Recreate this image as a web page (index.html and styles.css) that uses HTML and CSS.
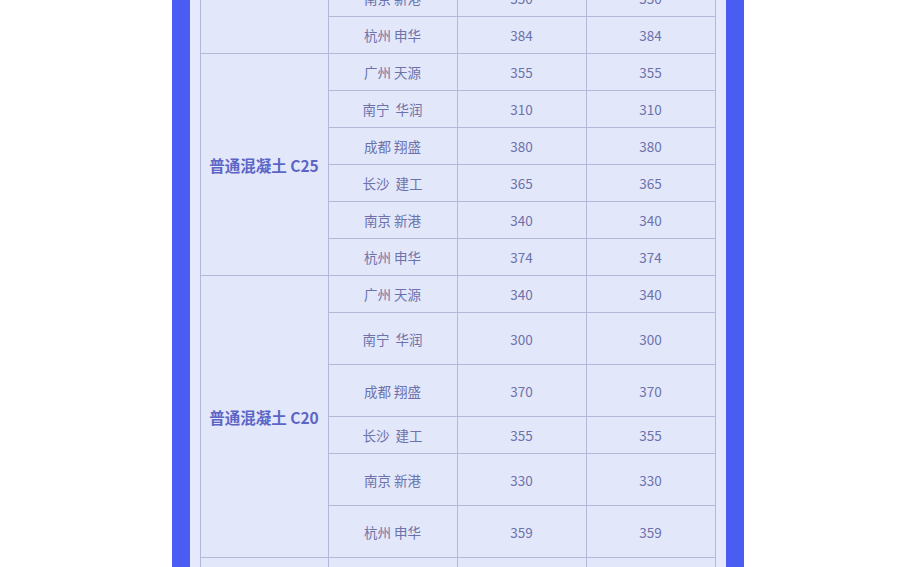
FILE: index.html
```html
<!DOCTYPE html>
<html lang="zh-CN">
<head>
<meta charset="utf-8">
<title>混凝土价格表</title>
<link rel="stylesheet" href="styles.css">
</head>
<body>
<div class="frame">
  <table class="prices">
    <colgroup>
      <col class="c-group"><col class="c-brand"><col class="c-num"><col class="c-num">
    </colgroup>
    <tbody>
      <tr class="r"><td class="group" rowspan="2"></td><td>南京 新港</td><td>350</td><td>350</td></tr>
      <tr class="r"><td>杭州 申华</td><td>384</td><td>384</td></tr>

      <tr class="r"><td class="group" rowspan="6">普通混凝土 C25</td><td>广州 天源</td><td>355</td><td>355</td></tr>
      <tr class="r"><td>南宁&nbsp;&nbsp;华润</td><td>310</td><td>310</td></tr>
      <tr class="r"><td>成都 翔盛</td><td>380</td><td>380</td></tr>
      <tr class="r"><td>长沙&nbsp;&nbsp;建工</td><td>365</td><td>365</td></tr>
      <tr class="r"><td>南京 新港</td><td>340</td><td>340</td></tr>
      <tr class="r"><td>杭州 申华</td><td>374</td><td>374</td></tr>

      <tr class="r"><td class="group" rowspan="6">普通混凝土 C20</td><td>广州 天源</td><td>340</td><td>340</td></tr>
      <tr class="t"><td>南宁&nbsp;&nbsp;华润</td><td>300</td><td>300</td></tr>
      <tr class="t"><td>成都 翔盛</td><td>370</td><td>370</td></tr>
      <tr class="r"><td>长沙&nbsp;&nbsp;建工</td><td>355</td><td>355</td></tr>
      <tr class="t"><td>南京 新港</td><td>330</td><td>330</td></tr>
      <tr class="t"><td>杭州 申华</td><td>359</td><td>359</td></tr>

      <tr class="r"><td class="group"></td><td></td><td></td><td></td></tr>
    </tbody>
  </table>
</div>
</body>
</html>
```

FILE: styles.css
```css
html, body {
  margin: 0;
  padding: 0;
  background: #ffffff;
  overflow: hidden;
  height: 100%;
}

body {
  font-family: "Noto Sans CJK SC", "Noto Sans", sans-serif;
}

.frame {
  width: 516px;
  margin: -21px auto 0;
  border-left: 18px solid #4b5cf2;
  border-right: 18px solid #4b5cf2;
  background: #e6e9fb;
  padding: 0 10px 40px;
}

.prices {
  width: 516px;
  border-collapse: collapse;
  table-layout: fixed;
  background: #e3e7fa;
}

.c-group { width: 128px; }
.c-brand { width: 129px; }
.c-num { width: 129px; }

.prices td {
  border: 1px solid #b4b9da;
  text-align: center;
  vertical-align: middle;
  padding: 0;
  font-size: 13.5px;
  color: #6c72aa;
  line-height: 18px;
}

.prices tr.r td { height: 36px; }
.prices tr.t td { height: 51px; }

.prices td.group {
  font-size: 15.5px;
  font-weight: 600;
  color: #5c65c6;
}
```
